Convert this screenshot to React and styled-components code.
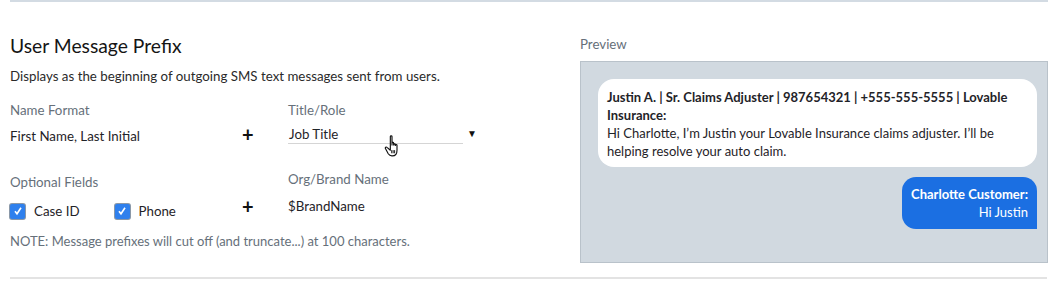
import React from "react"
import styled, { createGlobalStyle } from "styled-components"

const GlobalStyle = createGlobalStyle`
  body {
    margin: 0;
    background: #ffffff;
    font-family: "Lato", "Open Sans", sans-serif;
    color: #1f2328;
  }
`

const CheckMark = () => (
  <svg width="10" height="10" viewBox="0 0 10 10">
    <path d="M2 5.2l2 2.6L8 1.8" fill="none" stroke="#fff" strokeWidth="1.6" />
  </svg>
)

const App = () => {
  return (
    <>
      <GlobalStyle />
      <Page>
        <TopRule />
        <Section>
          <Settings>
            <Title>User Message Prefix</Title>
            <Description>
              Displays as the beginning of outgoing SMS text messages sent from users.
            </Description>
            <Fields>
              <Field $gap="8px">
                <Label>Name Format</Label>
                <Value>First Name, Last Initial</Value>
              </Field>
              <Plus $offset="23px">+</Plus>
              <Field $gap="6px">
                <Label>Title/Role</Label>
                <SelectRow>
                  <Select>
                    Job Title
                    <Cursor viewBox="0 0 20 24">
                      <path
                        d="M6 2.5c0-1 1.6-1 1.6 0v8.5 M7.6 10V8.8c0-1 1.6-1 1.6 0V11 M9.2 10.2c0-1 1.6-1 1.6 0V11.5 M10.8 10.8c0-1 1.6-1 1.6 0v4.7c0 3-1.6 5.5-4.5 5.5H7.4c-1.6 0-2.6-.8-3.4-2L1.3 14c-.6-1 .7-2 1.5-1.2L6 15.6V2.5"
                        fill="#ffffff"
                        stroke="#111111"
                        strokeWidth="1.1"
                        strokeLinejoin="round"
                      />
                      <path d="M7.3 15.5v3 M8.7 15.5v3 M10.1 15.5v3" stroke="#111" strokeWidth="0.9" />
                    </Cursor>
                  </Select>
                  <Caret>▼</Caret>
                </SelectRow>
              </Field>

              <Field $gap="11px" $offset="28px">
                <Label>Optional Fields</Label>
                <Checks>
                  <Check>
                    <Box>
                      <CheckMark />
                    </Box>
                    Case ID
                  </Check>
                  <Check>
                    <Box>
                      <CheckMark />
                    </Box>
                    Phone
                  </Check>
                </Checks>
              </Field>
              <Plus $offset="51px">+</Plus>
              <Field $gap="9px" $offset="25px">
                <Label>Org/Brand Name</Label>
                <Value>$BrandName</Value>
              </Field>
            </Fields>
            <Note>NOTE: Message prefixes will cut off (and truncate...) at 100 characters.</Note>
          </Settings>
          <PreviewColumn>
            <Label>Preview</Label>
            <PreviewBox>
              <Incoming>
                <strong>
                  Justin A. | Sr. Claims Adjuster | 987654321 | +555-555-5555 | Lovable Insurance:
                </strong>
                <br />
                Hi Charlotte, I’m Justin your Lovable Insurance claims adjuster. I’ll be helping
                resolve your auto claim.
              </Incoming>
              <Outgoing>
                <strong>Charlotte Customer:</strong>
                <br />
                Hi Justin
              </Outgoing>
            </PreviewBox>
          </PreviewColumn>
        </Section>
        <BottomRule />
      </Page>
    </>
  )
}

const Page = styled.div`
  width: 1054px;
  height: 282px;
  overflow: hidden;
`

const TopRule = styled.div`
  height: 2px;
  margin: 0 6px 0 10px;
  background: #d3dbe3;
`

const BottomRule = styled.div`
  height: 2px;
  margin: 14px 7px 0 10px;
  background: #e3e3e3;
`

const Section = styled.div`
  display: grid;
  grid-template-columns: 570px 468px;
  padding: 0 0 0 10px;
`

const Settings = styled.div`
  display: flex;
  flex-direction: column;
`

const Title = styled.h2`
  margin: 32px 0 0 0;
  font-size: 19.3px;
  font-weight: 400;
  line-height: 24px;
  color: #151515;
`

const Description = styled.div`
  margin-top: 9px;
  font-size: 13.3px;
  line-height: 18px;
  color: #2a2a2a;
`

const Fields = styled.div`
  display: grid;
  grid-template-columns: 232px 46px 200px;
  align-items: start;
  margin-top: 16px;
`

const Field = styled.div`
  min-width: 0;
  display: flex;
  flex-direction: column;
  align-items: flex-start;
  gap: ${(p) => p.$gap};
  margin-top: ${(p) => p.$offset || "0"};
`

const Label = styled.div`
  font-size: 13.3px;
  line-height: 18px;
  color: #66707a;
`

const Value = styled.div`
  font-size: 13.3px;
  line-height: 18px;
  color: #1f2328;
`

const Plus = styled.div`
  margin-top: ${(p) => p.$offset};
  font-size: 20px;
  line-height: 20px;
  font-weight: 700;
  color: #111;
`

const SelectRow = styled.div`
  display: flex;
  align-items: center;
  gap: 4px;
`

const Select = styled.div`
  position: relative;
  width: 174px;
  font-size: 13.3px;
  line-height: 18px;
  color: #1f2328;
  border-bottom: 1px solid #d5d5d5;
  padding-left: 1px;
`

const Cursor = styled.svg`
  position: absolute;
  left: 96px;
  top: 9px;
  width: 21px;
  height: 25px;
`

const Caret = styled.span`
  font-size: 10px;
  color: #111;
  margin-top: -3px;
`

const Checks = styled.div`
  display: flex;
  gap: 35px;
`

const Check = styled.label`
  display: flex;
  align-items: center;
  gap: 9px;
  font-size: 13.3px;
  line-height: 18px;
  color: #1f2328;
`

const Box = styled.span`
  display: inline-flex;
  align-items: center;
  justify-content: center;
  width: 15px;
  height: 15px;
  border-radius: 2px;
  background: #2f80ed;
  box-shadow: 0 0 0 1px #8a98a8;
`

const Note = styled.div`
  margin-top: 12px;
  font-size: 13px;
  line-height: 18px;
  color: #66707a;
`

const PreviewColumn = styled.div`
  display: flex;
  flex-direction: column;
  padding-top: 33px;
  gap: 8px;
`

const PreviewBox = styled.div`
  height: 202px;
  box-sizing: border-box;
  background: #d1d9e0;
  border: 1px solid #b9c2ca;
  padding: 17px 10px 0 17px;
  display: flex;
  flex-direction: column;
  align-items: stretch;
  gap: 10px;
`

const Incoming = styled.div`
  background: #ffffff;
  border-radius: 16px;
  padding: 9px 12px 7px 9px;
  font-size: 13px;
  line-height: 18px;
  color: #1f2328;

  strong {
    font-weight: 700;
  }
`

const Outgoing = styled.div`
  align-self: flex-end;
  background: #1b6fe2;
  color: #ffffff;
  border-radius: 14px 14px 0 14px;
  padding: 8px 9px 8px 9px;
  font-size: 13px;
  line-height: 18px;
  text-align: right;
`

export default App
